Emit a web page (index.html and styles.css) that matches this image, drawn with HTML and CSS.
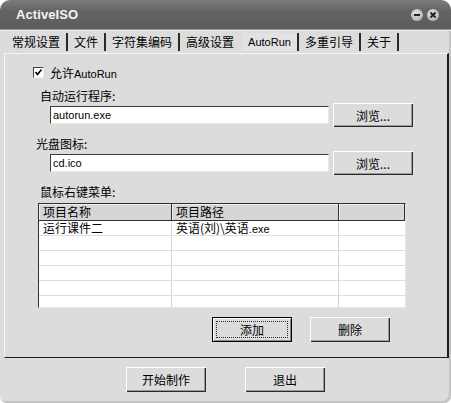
FILE: index.html
```html
<!DOCTYPE html>
<html lang="zh-CN">
<head>
    <meta charset="UTF-8">
    <title>ActiveISO</title>
    <link rel="stylesheet" href="styles.css">
</head>
<body>
    <div class="window">
        <div class="titlebar">
            <span class="title">ActiveISO</span>
            <div class="controls">
                <span class="ctl">
                    <svg width="12" height="12" viewBox="0 0 12 12"><rect x="3" y="5" width="6" height="2" fill="#222"/></svg>
                </span>
                <span class="ctl">
                    <svg width="12" height="12" viewBox="0 0 12 12"><path d="M3.5 3.5 L8.5 8.5 M8.5 3.5 L3.5 8.5" stroke="#222" stroke-width="1.8"/></svg>
                </span>
            </div>
        </div>
        <div class="tabs">
            <div class="tab">常规设置</div>
            <div class="tab">文件</div>
            <div class="tab">字符集编码</div>
            <div class="tab no-sep">高级设置</div>
            <div class="tab active"><span class="en">AutoRun</span></div>
            <div class="tab">多重引导</div>
            <div class="tab">关于</div>
        </div>
        <div class="panel">
            <div class="check-row">
                <span class="checkbox">
                    <svg width="9" height="9" viewBox="0 0 9 9"><path d="M1.5 4 L3.5 6.5 L7.5 1.5" stroke="#000" stroke-width="1.6" fill="none"/></svg>
                </span>
                <span>允许<span class="en">AutoRun</span></span>
            </div>
            <div class="label program-label">自动运行程序:</div>
            <div class="field-row">
                <div class="input"><span class="en">autorun.exe</span></div>
                <button class="btn browse">浏览...</button>
            </div>
            <div class="label icon-label">光盘图标:</div>
            <div class="field-row">
                <div class="input"><span class="en">cd.ico</span></div>
                <button class="btn browse">浏览...</button>
            </div>
            <div class="label menu-label">鼠标右键菜单:</div>
            <div class="list">
                <div class="list-head">
                    <div class="head-cell c1">项目名称</div>
                    <div class="head-cell c2">项目路径</div>
                    <div class="head-cell c3"></div>
                </div>
                <div class="list-body">
                    <div class="list-row">
                        <div class="cell c1">运行课件二</div>
                        <div class="cell c2">英语(刘)\英语<span class="en">.exe</span></div>
                        <div class="cell c3"></div>
                    </div>
                    <div class="list-row"><div class="cell c1"></div><div class="cell c2"></div><div class="cell c3"></div></div>
                    <div class="list-row"><div class="cell c1"></div><div class="cell c2"></div><div class="cell c3"></div></div>
                    <div class="list-row"><div class="cell c1"></div><div class="cell c2"></div><div class="cell c3"></div></div>
                    <div class="list-row"><div class="cell c1"></div><div class="cell c2"></div><div class="cell c3"></div></div>
                    <div class="list-row"><div class="cell c1"></div><div class="cell c2"></div><div class="cell c3"></div></div>
                    <div class="list-row"><div class="cell c1"></div><div class="cell c2"></div><div class="cell c3"></div></div>
                </div>
            </div>
            <div class="list-buttons">
                <button class="btn focused"><span class="focus-ring">添加</span></button>
                <button class="btn">删除</button>
            </div>
        </div>
        <div class="footer">
            <button class="btn">开始制作</button>
            <button class="btn">退出</button>
        </div>
    </div>
</body>
</html>
```

FILE: styles.css
```css
html, body {
    margin: 0;
    padding: 0;
    background: #fff;
}

body {
    font-family: "Noto Sans CJK SC", "Liberation Sans", sans-serif;
    font-size: 12px;
    color: #000;
}

.en {
    font-family: "Liberation Sans", sans-serif;
    font-size: 11px;
}

.window {
    width: 451px;
    height: 403px;
    background: #dcdcdc;
    border-radius: 10px 10px 7px 7px;
    overflow: hidden;
    display: flex;
    flex-direction: column;
    box-sizing: border-box;
    box-shadow: inset -2px -2px 0 #c4c4c4;
}

.titlebar {
    height: 30px;
    flex-shrink: 0;
    display: flex;
    align-items: center;
    padding: 0 12px 0 16px;
    background: linear-gradient(#7c7c7c, #636363 40%, #5c5c5c);
    border-bottom: 1px solid #9a9a9a;
    box-sizing: border-box;
}

    .titlebar .title {
        font-family: "Liberation Sans", sans-serif;
        font-weight: bold;
        font-size: 13px;
        color: #f4f4f4;
        letter-spacing: 0.1px;
    }

    .titlebar .controls {
        margin-left: auto;
        display: flex;
        gap: 4px;
    }

    .titlebar .ctl {
        width: 12px;
        height: 12px;
        border-radius: 50%;
        background: radial-gradient(circle at 40% 35%, #e0e0e0, #a8a8a8);
        display: flex;
    }

.tabs {
    height: 23px;
    flex-shrink: 0;
    display: flex;
    padding-left: 6px;
    border-top: 1px solid #eeeeee;
    box-sizing: border-box;
}

    .tabs .tab {
        height: 18px;
        margin-top: 2px;
        padding: 0 6px;
        border-right: 2px solid #2a2a2a;
        display: flex;
        align-items: center;
        line-height: 1;
        white-space: nowrap;
    }

    .tabs .tab.no-sep {
        border-right-color: transparent;
    }

    .tabs .tab.active {
        background: #e2e2e2;
    }

.panel {
    height: 305px;
    margin: 0 2px 0 4px;
    border-top: 1px solid #f4f4f4;
    border-left: 1px solid #f4f4f4;
    border-right: 2px solid #1e1e1e;
    border-bottom: 1px solid #1e1e1e;
    box-sizing: border-box;
    flex-shrink: 0;
}

.check-row {
    height: 14px;
    margin: 11px 0 0 28px;
    display: flex;
    align-items: center;
    gap: 6px;
}

.checkbox {
    width: 11px;
    height: 11px;
    background: #fff;
    border-top: 1px solid #404040;
    border-left: 1px solid #404040;
    border-right: 1px solid #f0f0f0;
    border-bottom: 1px solid #f0f0f0;
    box-sizing: border-box;
    display: flex;
    align-items: center;
    justify-content: center;
}

.label {
    height: 14px;
    line-height: 14px;
    margin-top: 10px;
    margin-left: 35px;
}

.label.icon-label {
    margin-left: 31px;
}

.field-row {
    height: 24px;
    display: flex;
    align-items: center;
    margin-left: 45px;
    gap: 4px;
}

.input {
    width: 279px;
    height: 18px;
    background: #fff;
    border-top: 1px solid #3c3c3c;
    border-left: 1px solid #3c3c3c;
    border-right: 1px solid #e8e8e8;
    border-bottom: 1px solid #e8e8e8;
    box-sizing: border-box;
    padding-left: 2px;
    display: flex;
    align-items: center;
}

.btn {
    width: 80px;
    height: 25px;
    font: inherit;
    color: #000;
    background: #dcdcdc;
    border: none;
    padding: 0;
    box-shadow: inset 1px 1px 0 #ffffff, inset -1px -1px 0 #2a2a2a, inset -2px -2px 0 #9a9a9a;
    display: flex;
    align-items: center;
    justify-content: center;
}

.btn.browse {
    height: 24px;
}

.btn.focused {
    box-shadow: inset 0 0 0 1px #000, inset 2px 2px 0 #ffffff, inset -2px -2px 0 #8a8a8a;
}

    .btn.focused .focus-ring {
        width: 70px;
        height: 15px;
        border: 1px dotted #333;
        display: flex;
        align-items: center;
        justify-content: center;
    }

.list {
    width: 368px;
    height: 105px;
    margin: 4px 0 0 33px;
    background: #fff;
    border-top: 1px solid #303030;
    border-left: 1px solid #303030;
    border-right: 1px solid #e4e4e4;
    border-bottom: 1px solid #e4e4e4;
    box-sizing: border-box;
    overflow: hidden;
}

.list-head {
    display: flex;
    height: 17px;
    border-bottom: 1px solid #303030;
    box-sizing: border-box;
}

    .list-head .head-cell {
        background: #d6d6d6;
        border-right: 1px solid #303030;
        box-shadow: inset 1px 1px 0 #f0f0f0;
        padding-left: 4px;
        box-sizing: border-box;
        line-height: 16px;
    }

.c1 {
    width: 133px;
}

.c2 {
    width: 167px;
}

.c3 {
    flex: 1;
}

.list-row {
    display: flex;
    height: 14px;
    border-bottom: 1px solid #dedede;
}

    .list-row .cell {
        border-right: 1px solid #d4d4d4;
        padding-left: 4px;
        box-sizing: border-box;
        line-height: 14px;
        white-space: nowrap;
    }

    .list-row .cell.c3 {
        border-right: none;
    }

.list-buttons {
    display: flex;
    gap: 18px;
    margin: 9px 0 0 207px;
}

.footer {
    flex: 1;
    display: flex;
    justify-content: center;
    gap: 39px;
    padding-top: 9px;
}
```
